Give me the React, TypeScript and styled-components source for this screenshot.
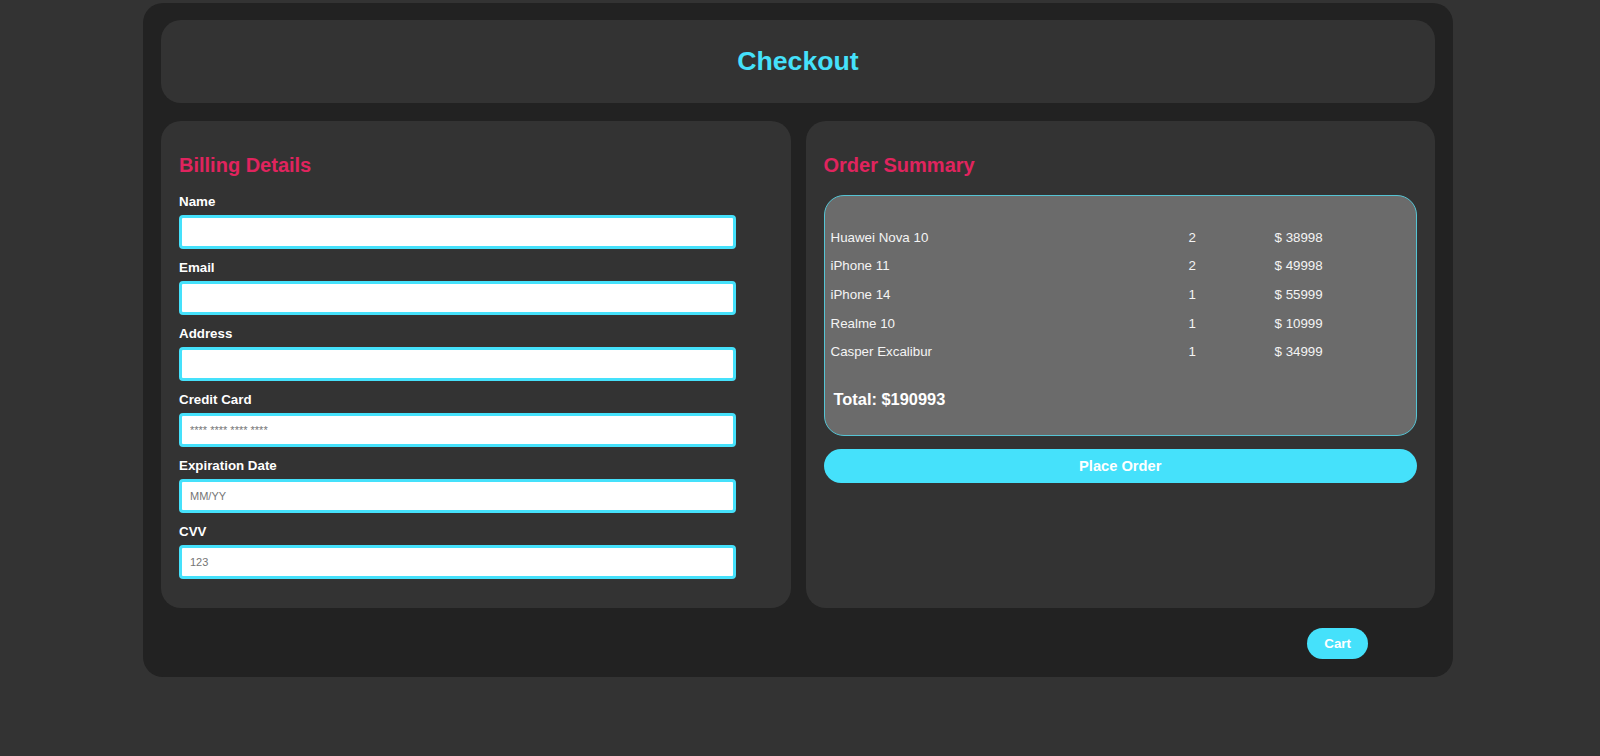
import styled, { createGlobalStyle } from 'styled-components'

const cyan = '#45e1fb'
const pink = '#e0245e'

const items = [
   { name: 'Huawei Nova 10', qty: 2, price: 38998 },
   { name: 'iPhone 11', qty: 2, price: 49998 },
   { name: 'iPhone 14', qty: 1, price: 55999 },
   { name: 'Realme 10', qty: 1, price: 10999 },
   { name: 'Casper Excalibur', qty: 1, price: 34999 },
]

const fields = [
   { label: 'Name', placeholder: '' },
   { label: 'Email', placeholder: '' },
   { label: 'Address', placeholder: '' },
   { label: 'Credit Card', placeholder: '**** **** **** ****' },
   { label: 'Expiration Date', placeholder: 'MM/YY' },
   { label: 'CVV', placeholder: '123' },
]

const App = () => {
   const total = items.reduce((sum, item) => sum + item.price, 0)
   return (
      <>
         <GlobalStyle />
         <Container>
            <Header>
               <Title>Checkout</Title>
            </Header>
            <Columns>
               <Panel>
                  <PanelTitle>Billing Details</PanelTitle>
                  {fields.map(({ label, placeholder }) => (
                     <Field key={label}>
                        <Label>{label}</Label>
                        <Input type="text" placeholder={placeholder} />
                     </Field>
                  ))}
               </Panel>
               <Panel>
                  <PanelTitle>Order Summary</PanelTitle>
                  <Summary>
                     {items.map(({ name, qty, price }) => (
                        <Row key={name}>
                           <span>{name}</span>
                           <span>{qty}</span>
                           <span>$ {price}</span>
                        </Row>
                     ))}
                     <Total>Total: ${total}</Total>
                  </Summary>
                  <PlaceOrder>Place Order</PlaceOrder>
               </Panel>
            </Columns>
            <Footer>
               <CartButton>Cart</CartButton>
            </Footer>
         </Container>
      </>
   )
}

export default App

const GlobalStyle = createGlobalStyle`
   * {
      box-sizing: border-box;
   }
   body {
      margin: 0;
      background: #333333;
      font-family: 'Liberation Sans', Arial, sans-serif;
      color: #fff;
   }
`
const Container = styled.div`
   width: 1310px;
   margin: 3px 0 0 143px;
   padding: 17px 18px 18px;
   background: #222222;
   border-radius: 20px;
`
const Header = styled.header`
   height: 83px;
   display: flex;
   align-items: center;
   justify-content: center;
   background: #333333;
   border-radius: 20px;
`
const Title = styled.h2`
   margin: 0;
   font-size: 26.67px;
   font-weight: bold;
   color: ${cyan};
`
const Columns = styled.div`
   display: grid;
   grid-template-columns: 1fr 1fr;
   gap: 15px;
   margin-top: 18px;
`
const Panel = styled.section`
   background: #333333;
   border-radius: 20px;
   padding: 18px;
`
const PanelTitle = styled.h3`
   margin: 15px 0 16.5px;
   font-size: 20px;
   line-height: 23px;
   font-weight: bold;
   color: ${pink};
`
const Field = styled.div`
   display: flex;
   flex-direction: column;
   align-items: flex-start;
   margin-bottom: 11px;
`
const Label = styled.label`
   font-size: 13.33px;
   line-height: 15px;
   font-weight: bold;
   color: #fff;
   margin-bottom: 6px;
`
const Input = styled.input`
   width: 557px;
   height: 34px;
   padding: 0 8px;
   border: 3px solid ${cyan};
   border-radius: 4px;
   background: #fff;
   font-family: 'Liberation Sans', Arial, sans-serif;
   font-size: 11px;
   outline: none;
   &::placeholder {
      color: #757575;
   }
`
const Summary = styled.div`
   margin-top: 18px;
   padding: 27px 6px 26px;
   background: #6b6b6b;
   border: 1px solid #55c4d4;
   border-radius: 20px;
`
const Row = styled.div`
   display: grid;
   grid-template-columns: 358px 86px 1fr;
   align-items: center;
   height: 28.6px;
   font-size: 13.33px;
   color: #f4f4f4;
`
const Total = styled.h3`
   margin: 24px 0 0 3px;
   font-size: 16.4px;
   line-height: 19px;
   font-weight: bold;
   color: #fff;
`
const PlaceOrder = styled.button`
   display: block;
   width: 100%;
   height: 34px;
   margin-top: 13px;
   border: none;
   border-radius: 17px;
   background: ${cyan};
   color: #fff;
   font-family: 'Liberation Sans', Arial, sans-serif;
   font-size: 14.67px;
   font-weight: bold;
   cursor: pointer;
`
const Footer = styled.div`
   display: flex;
   justify-content: flex-end;
   margin-top: 20px;
   padding-right: 67px;
`
const CartButton = styled.button`
   height: 31px;
   padding: 0 17px;
   border: none;
   border-radius: 16px;
   background: ${cyan};
   color: #fff;
   font-family: 'Liberation Sans', Arial, sans-serif;
   font-size: 13.33px;
   font-weight: bold;
   cursor: pointer;
`
